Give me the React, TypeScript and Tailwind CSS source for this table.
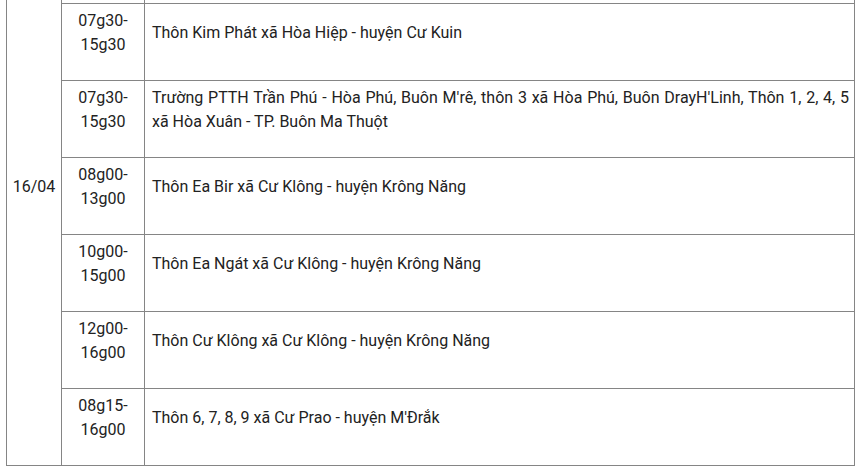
import * as React from 'react';

type Row = { time: string[]; place: string };

// first row sits above the visible area; only its bottom border shows
const rows: Row[] = [
  { time: [''], place: '' },
  { time: ['07g30-', '15g30'], place: 'Thôn Kim Phát xã Hòa Hiệp - huyện Cư Kuin' },
  {
    time: ['07g30-', '15g30'],
    place:
      "Trường PTTH Trần Phú - Hòa Phú, Buôn M'rê, thôn 3 xã Hòa Phú, Buôn DrayH'Linh, Thôn 1, 2, 4, 5 xã Hòa Xuân - TP. Buôn Ma Thuột",
  },
  { time: ['08g00-', '13g00'], place: 'Thôn Ea Bir xã Cư Klông - huyện Krông Năng' },
  { time: ['10g00-', '15g00'], place: 'Thôn Ea Ngát xã Cư Klông - huyện Krông Năng' },
  { time: ['12g00-', '16g00'], place: 'Thôn Cư Klông xã Cư Klông - huyện Krông Năng' },
  { time: ['08g15-', '16g00'], place: "Thôn 6, 7, 8, 9 xã Cư Prao - huyện M'Đrắk" },
];

const cell = 'border border-[#858585] align-middle pt-[5px] pb-[5px] h-[77px]';

const Lines: React.FC<{ lines: string[] }> = ({ lines }) => (
  <p className="mb-[18px] min-h-[24px]">
    {lines.map((l, i) => (
      <React.Fragment key={i}>
        {i > 0 && <br />}
        {l}
      </React.Fragment>
    ))}
  </p>
);

export default function App() {
  return (
    <div className="w-[857px] h-[466px] overflow-hidden bg-white">
      <div className="pl-[6px] -mt-[74px]">
        <table
          className="border-collapse w-[849px] text-[16px] leading-[24px] text-[#222]"
          style={{ fontFamily: 'Roboto, "Liberation Sans", sans-serif' }}
        >
          <colgroup>
            <col className="w-[55px]" />
            <col className="w-[83px]" />
            <col />
          </colgroup>
          <tbody>
            {rows.map((r, i) => (
              <tr key={i}>
                {i === 0 && (
                  <td rowSpan={rows.length} className={`${cell} px-[4px] text-center`}>
                    <Lines lines={['16/04']} />
                  </td>
                )}
                <td className={`${cell} px-[4px] text-center`}>
                  <Lines lines={r.time} />
                </td>
                <td className={`${cell} pl-[7px] pr-[5px] text-justify`}>
                  <Lines lines={[r.place]} />
                </td>
              </tr>
            ))}
          </tbody>
        </table>
      </div>
    </div>
  );
}
